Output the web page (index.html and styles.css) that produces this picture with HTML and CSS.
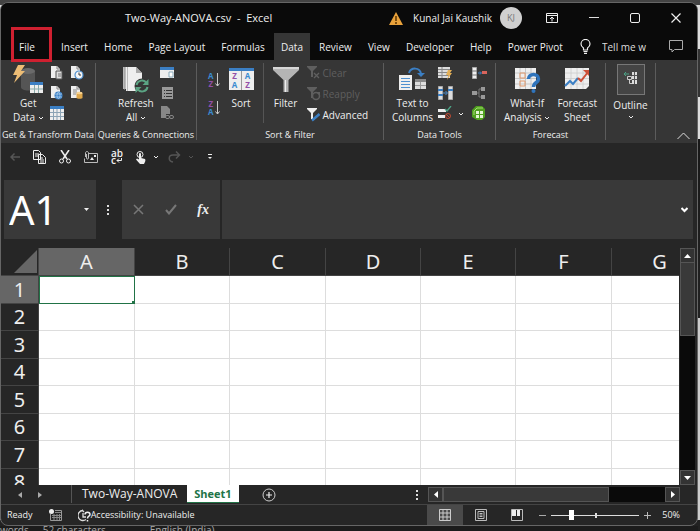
FILE: index.html
```html
<!DOCTYPE html>
<html lang="en">
<head>
	<meta charset="utf-8">
	<title>Two-Way-ANOVA.csv - Excel</title>
	<link rel="stylesheet" href="styles.css">
</head>
<body>
	<svg class="defs" aria-hidden="true">
		<symbol id="page" viewBox="0 0 14 14"><path d="M1 0h6l3 3v9H1z" fill="#eee"/><path d="M7 0v3h3" fill="none" stroke="#888"/></symbol>
		<symbol id="funnel" viewBox="0 0 14 14"><path d="M0 0h10v1L6 5v6H4V5L0 1z" fill="currentColor"/></symbol>
		<symbol id="down" viewBox="0 0 6 6"><path d="M1 2l2 2 2-2" fill="none" stroke="currentColor"/></symbol>
	</svg>

	<div class="window">
		<header class="titlebar">
			<div class="title">Two-Way-ANOVA.csv&nbsp; -&nbsp; Excel</div>
			<svg class="warn" width="14" height="13" viewBox="0 0 14 13"><path d="M7 0l7 13H0z" fill="#e9a23b"/><path d="M7 4v5M7 10v2" stroke="#5a3300" stroke-width="1.5"/></svg>
			<span class="user">Kunal Jai Kaushik</span>
			<span class="avatar">KJ</span>
			<div class="controls">
				<button aria-label="Ribbon display options"><svg width="12" height="10" viewBox="0 0 12 10"><path d="M.5.5h11v9H.5zM.5 2.5h11M6 8.500V4M4 6l2-2 2 2" fill="none" stroke="#eee"/></svg></button>
				<button aria-label="Minimize"><svg width="10" height="10"><path d="M0 4.500h10" stroke="#ddd"/></svg></button>
				<button aria-label="Maximize"><svg width="10" height="10"><rect x=".5" y=".5" width="9" height="9" rx="1.500" fill="none" stroke="#eee"/></svg></button>
				<button aria-label="Close"><svg width="10" height="10"><path d="M.5.5l9 9M9.500.5l-9 9" stroke="#eee" stroke-width="1.200"/></svg></button>
			</div>
		</header>

		<div class="tabs">
			<nav>
				<button class="file">File</button>
				<button>Insert</button>
				<button>Home</button>
				<button>Page Layout</button>
				<button>Formulas</button>
				<button class="active">Data</button>
				<button>Review</button>
				<button>View</button>
				<button>Developer</button>
				<button>Help</button>
				<button>Power Pivot</button>
			</nav>
			<label for="tellme"><svg width="11" height="15" viewBox="0 0 11 15"><path d="M3.500 11V9C2 8 1 6.500 1 5a4.500 4.500 0 0 1 9 0c0 1.500-1 3-2.500 4v2zM3.500 12.500h4M4 14.300h3" fill="none" stroke="#eee" stroke-width="1.200"/></svg></label>
			<input id="tellme" class="tellme" type="text" placeholder="Tell me w">
			<button class="comment" aria-label="Comments"><svg width="14" height="13" viewBox="0 0 14 13"><path d="M.5.5h13v9H5.500l-2.500 2.500v-2.500H.5z" fill="none" stroke="#aaa"/></svg></button>
		</div>

		<section class="ribbon">
			<div class="group g-get">
				<div class="tools">
					<button class="big">
						<svg width="30" height="29" viewBox="0 0 30 29"><path d="M8 6v16c0 2 3 3.500 7 3.500s7-1.500 7-3.500V6z" fill="#555"/><ellipse cx="15" cy="6" rx="7" ry="3" fill="#6a6a6a"/><path d="M5 0h7L8 6h4L1 18l3-8H0z" fill="#edbd75"/><path d="M17 17h13v11H17z" fill="#eee"/><path d="M17 17h13v3H17z" fill="#3b7fc4"/><path d="M17 24h13M21.500 20v8M25.500 20v8" stroke="#8aa"/></svg>
						<span>Get</span><span>Data <svg width="6" height="6"><use href="#down"/></svg></span>
					</button>
					<div class="smalls two">
						<button aria-label="From Text/CSV"><svg width="14" height="14"><use href="#page"/><path d="M6 5h6v8H6z" fill="#ddd" stroke="#555"/><path d="M8 8h3M8 10h3" stroke="#777"/></svg></button>
						<button aria-label="Recent Sources"><svg width="14" height="14"><use href="#page"/><circle cx="9" cy="9" r="4" fill="#f5f5f5" stroke="#4d8fcf" stroke-width="1.200"/><path d="M9 6.500V9h2" fill="none" stroke="#333"/></svg></button>
						<button aria-label="From Web"><svg width="14" height="14"><use href="#page"/><circle cx="8.500" cy="9.500" r="4" fill="#3b7fc4"/><path d="M5 8h7M5 11h7M8.500 6c-2 2-2 5 0 7M8.500 6c2 2 2 5 0 7" fill="none" stroke="#b8d8f4" stroke-width=".7"/></svg></button>
						<button aria-label="Existing Connections"><svg width="14" height="14"><use href="#page"/><path d="M3 4h4M3 6h4M3 8h3" stroke="#888"/><path d="M6.500 7v5c0 1 6 1 6 0V7z" fill="#dfa84c"/><ellipse cx="9.500" cy="7" rx="3" ry="1.300" fill="#f7d391"/></svg></button>
						<button aria-label="From Table/Range"><svg width="14" height="14"><path d="M0 0h14v14H0z" fill="#eee"/><path d="M0 0h14v3H0z" fill="#3b7fc4"/><path d="M0 6.500h14M0 10.500h14M3.500 3v11M7 3v11M10.500 3v11" stroke="#8ba3b5"/></svg></button>
					</div>
				</div>
				<div class="name">Get &amp; Transform Data</div>
			</div>

			<div class="group g-query">
				<div class="tools">
					<button class="big">
						<svg width="28" height="29" viewBox="0 0 28 29"><path d="M1 2h12v22H1z" fill="#bbb"/><path d="M4 2h10l6 6v18H4z" fill="#eee"/><path d="M2.500 2v23M5.500 2v24" stroke="#999" stroke-width=".6"/><path d="M14 2v6h6z" fill="#aaa"/><circle cx="20" cy="21" r="7.500" fill="#363636"/><path d="M14.500 20a5.500 5.500 0 0 1 10-2M25.500 22a5.500 5.500 0 0 1-10 2" fill="none" stroke="#5ba383" stroke-width="2"/><path d="M26.500 14v6h-6zM13.500 28v-6h6z" fill="#5ba383"/></svg>
						<span>Refresh</span><span>All <svg width="6" height="6"><use href="#down"/></svg></span>
					</button>
					<div class="smalls">
						<button aria-label="Queries &amp; Connections"><svg width="14" height="14"><path d="M0 1h14v11H0z" fill="#eee"/><path d="M0 1h14v3H0z" fill="#3b7fc4"/><path d="M9 6h4v5H9z" fill="#fff" stroke="#8ab"/></svg></button>
						<button aria-label="Properties"><svg width="14" height="14"><path d="M2 1h11v12H2z" fill="#999"/><path d="M4 4.500h1M6 4.500h6M4 7.500h1M6 7.500h6M4 10.500h1M6 10.500h6" stroke="#333"/></svg></button>
						<button aria-label="Edit Links"><svg width="14" height="14"><path d="M1 0h6l3 3v5H6v4H1z" fill="#888"/><rect x="5.500" y="9.500" width="4" height="3" rx="1.500" fill="none" stroke="#888"/><rect x="9.500" y="9.500" width="4" height="3" rx="1.500" fill="none" stroke="#888"/></svg></button>
					</div>
				</div>
				<div class="name">Queries &amp; Connections</div>
			</div>

			<div class="group g-sort">
				<div class="tools">
					<div class="orders">
						<button aria-label="Sort A to Z"><span class="az"><b class="blue">A</b><b class="purple">Z</b></span><svg width="5" height="14"><path d="M2.500 0v13M.5 10.500l2 2.500 2-2.500" fill="none" stroke="#ccc"/></svg></button>
						<button aria-label="Sort Z to A"><span class="az"><b class="purple">Z</b><b class="blue">A</b></span><svg width="5" height="14"><path d="M2.500 0v13M.5 10.500l2 2.500 2-2.500" fill="none" stroke="#ccc"/></svg></button>
					</div>
					<button class="big sort">
						<span class="sort-icon"><i class="purple">Z</i><i class="blue">A</i><i class="blue">A</i><i class="purple">Z</i></span>
						<span>Sort</span>
					</button>
					<button class="big filter">
						<svg width="26" height="29" viewBox="0 0 26 29"><path d="M0 2h26v3L15.500 15v12h-5V15L0 5z" fill="#b5b5b5"/><path d="M0 2h26v2H0z" fill="#d5d5d5"/><path d="M12.500 15v12" stroke="#eee"/></svg>
						<span>Filter</span>
					</button>
					<div class="filters">
						<button disabled><svg width="14" height="14"><use href="#funnel"/><path d="M7 7l5 5M12 7l-5 5" stroke="currentColor" stroke-width="1.300"/></svg>Clear</button>
						<button disabled><svg width="14" height="14"><use href="#funnel"/><circle cx="9" cy="9" r="3.500" fill="#363636" stroke="currentColor" stroke-width="1.500"/><path d="M9 5h4v4z" fill="currentColor"/></svg>Reapply</button>
						<button><svg width="14" height="14"><use href="#funnel"/><path d="M5 12.500L12.500 6" stroke="#3b7fc4" stroke-width="2.500"/></svg>Advanced</button>
					</div>
				</div>
				<div class="name">Sort &amp; Filter</div>
			</div>

			<div class="group g-data">
				<div class="tools">
					<button class="big">
						<svg width="28" height="29" viewBox="0 0 28 29"><path d="M0 10h13v15H0z" fill="#eee"/><path d="M2 13.500h9M2 16.500h9M2 19.500h9M2 22.500h9" stroke="#4d8fcf"/><path d="M16 14h11v10H16z" fill="#ddd"/><path d="M16 14h11v3H16z" fill="#888"/><path d="M21.500 17v7M16 20.500h11" stroke="#999"/><path d="M10 8c2-6 11-6 12 1" fill="none" stroke="#3b7fc4" stroke-width="2"/><path d="M18 8h8l-4 4z" fill="#3b7fc4"/></svg>
						<span>Text to</span><span>Columns</span>
					</button>
					<div class="smalls">
						<button aria-label="Flash Fill"><svg width="14" height="14"><path d="M0 1h12v11H0z" fill="#ddd"/><path d="M0 3.500h12M0 6.500h12M0 9.500h12M4 1v11" stroke="#888"/><path d="M10 4h4l-2 3h2l-5 7 1.500-5H8z" fill="#e4b057"/></svg></button>
						<button aria-label="Remove Duplicates"><svg width="15" height="14"><path d="M.5.5h4v13h-4zM10.500.5h4v13h-4z" fill="#ddd" stroke="#aaa"/><path d="M0 3h5v2H0zM0 8h5v2H0zM10 3h5v2h-5z" fill="#3b7fc4"/><path d="M5 7h4M7.500 5l2 2-2 2" fill="none" stroke="#4d8fcf"/></svg></button>
						<button aria-label="Data Validation"><svg width="14" height="14"><path d="M0 3h8v3H0zM0 9h7v3H0z" fill="#eee"/><path d="M7 3l2 2 4-5" fill="none" stroke="#4ca386" stroke-width="1.300"/><circle cx="10" cy="10" r="2.500" fill="none" stroke="#c04b32"/><path d="M8 8l4 4" stroke="#c04b32"/></svg></button>
					</div>
					<svg class="more" width="6" height="6"><use href="#down"/></svg>
					<div class="smalls">
						<button aria-label="Consolidate"><svg width="15" height="14"><path d="M.5 1.500h4v11h-4z" fill="#eee" stroke="#aaa"/><path d="M0 5h5M0 9h5" stroke="#777"/><path d="M6 7h3M8 5.500L9.500 7 8 8.500" fill="none" stroke="#3b7fc4"/><path d="M10 5h5v3h-5z" fill="#d8645c"/></svg></button>
						<button aria-label="Relationships"><svg width="14" height="14"><path d="M0 5h5v4H0zM9 1h4v4H9zM9 9h4v4H9z" fill="#999"/><path d="M5 7h2V3h2M7 7v4h2" fill="none" stroke="#777"/></svg></button>
						<button aria-label="Manage Data Model"><svg width="14" height="14"><path d="M0 4l4-4h6l3 3v8l-3 3H5l-5-3z" fill="#4fa01f"/><path d="M2 9V5l3-3h6" fill="none" stroke="#a6dc73"/><path d="M4 5h7v7H4z" fill="#e4f5d3"/><path d="M4 8.500h7M7.500 5v7" stroke="#4fa01f"/></svg></button>
					</div>
				</div>
				<div class="name">Data Tools</div>
			</div>

			<div class="group g-cast">
				<div class="tools">
					<button class="big">
						<svg width="27" height="29" viewBox="0 0 27 29"><path d="M1 3h21v21H1z" fill="#eee"/><path d="M1 8h21M1 13.500h21M1 19h21M6 3v21M11.500 3v21M17 3v21" stroke="#bbb" stroke-width=".8"/><path d="M6 8h5v5H6zM6 16h5v5H6z" fill="none" stroke="#e39a6c"/><path d="M14.500 14c0-6 10-6 10 0 0 4-5 3-5 8" fill="none" stroke="#2f74bc" stroke-width="3.500"/><circle cx="19.500" cy="26" r="2" fill="#2f74bc"/></svg>
						<span>What-If</span><span>Analysis <svg width="6" height="6"><use href="#down"/></svg></span>
					</button>
					<button class="big">
						<svg width="26" height="29" viewBox="0 0 26 29"><path d="M1 3h24v18l-3 3H1z" fill="#eee"/><path d="M1 8h24M1 13.500h24M1 19h24M7 3v21M13 3v21M19 3v21" stroke="#ccc" stroke-width=".8"/><path d="M1 21l5-5 3 3 5-6" fill="none" stroke="#3b7fc4" stroke-width="2"/><path d="M14 13l3 3 7-9" fill="none" stroke="#cd5038" stroke-width="2"/><path d="M19 5h6v6z" fill="#cd5038"/></svg>
						<span>Forecast</span><span>Sheet</span>
					</button>
				</div>
				<div class="name">Forecast</div>
			</div>

			<div class="group g-outline">
				<button class="big">
					<span class="frame"><svg width="14" height="14"><path d="M8 1h5v12H8z" fill="#ddd"/><path d="M8 4.500h5M8 8.500h5M10.500 1v12" stroke="#555"/><path d="M3.500 5.500h4v3h-4zM5.500 9v3.500H8" fill="none" stroke="#ccc"/><path d="M0 3h5M2 1L0 3l2 2" fill="none" stroke="#4ca386"/></svg></span>
					<span>Outline</span>
					<svg width="6" height="6"><use href="#down"/></svg>
				</button>
			</div>
			<button class="collapse" aria-label="Collapse the ribbon"><svg width="13" height="8"><path d="M.5 7l6-6 6 6" fill="none" stroke="#ddd"/></svg></button>
		</section>

		<div class="quick">
			<button disabled aria-label="Back"><svg width="10" height="10"><path d="M10 5H1M4.500 1.500L1 5l3.500 3.500" fill="none" stroke="currentColor" stroke-width="1.500"/></svg></button>
			<button aria-label="Copy"><svg width="13" height="14"><path d="M.5.5h5l2 2v7h-7zM5.500 4.500h4l3 3v6h-7z" fill="#262626" stroke="currentColor"/><path d="M2 4h4M2 6h3M7 8h3M7 10h4M7 12h4" stroke="currentColor"/></svg></button>
			<button aria-label="Cut"><svg width="12" height="14"><path d="M2 0l6 9M10 0L4 9" stroke="currentColor" stroke-width="1.600"/><circle cx="2.500" cy="11" r="2" fill="none" stroke="currentColor"/><circle cx="9.500" cy="11" r="2" fill="none" stroke="currentColor"/></svg></button>
			<button aria-label="Attach"><svg width="14" height="12"><path d="M5 2.500h8.500v9H.5v-4" fill="none" stroke="#bbb"/><path d="M1.500 6V2c0-2 3-2 3 0v5c0 1.500-2 1.500-2 0V3" fill="none" stroke="#bbb"/><path d="M6 9l2-3 2 3zM10 4h2v2h-2z" fill="currentColor"/></svg></button>
			<button class="spell" aria-label="Wrap Text"><span>ab</span><span>c<svg width="6" height="5"><path d="M5.500 0v2.500H1M3 .5l-2 2 2 2" fill="none" stroke="currentColor"/></svg></span></button>
			<button aria-label="Touch/Mouse Mode"><svg width="10" height="13"><circle cx="4" cy="3.500" r="3" fill="none" stroke="currentColor"/><path d="M3 3c0-1.500 2-1.500 2 0v4l4 1c1 1 0 3-1 5H4L0 8.500l1-1 2 1z" fill="currentColor"/></svg></button>
			<svg width="6" height="6"><use href="#down"/></svg>
			<button disabled aria-label="Redo"><svg width="13" height="12"><path d="M11 4H5c-5 0-5 6 0 7M8 .5L11.500 4 8 7.500" fill="none" stroke="currentColor" stroke-width="1.500"/></svg></button>
			<svg class="dim" width="6" height="6"><use href="#down"/></svg>
			<button class="custom" aria-label="Customize toolbar"><svg width="6" height="6"><path d="M1 .5h4" stroke="currentColor"/><path d="M1 3h4l-2 2z" fill="currentColor"/></svg></button>
		</div>

		<div class="formula">
			<div class="namebox">
				<input type="text" value="A1" aria-label="Name box">
				<svg width="5" height="3"><path d="M0 0h5L2.500 3z" fill="#eee"/></svg>
			</div>
			<svg class="dots" width="2" height="10"><path d="M0 0h2v2H0zM0 4h2v2H0zM0 8h2v2H0z" fill="#ddd"/></svg>
			<div class="entry">
				<button aria-label="Cancel"><svg width="11" height="11"><path d="M1 1l9 9M10 1l-9 9" stroke="#777" stroke-width="1.500"/></svg></button>
				<button aria-label="Enter"><svg width="12" height="11"><path d="M1 6l3 3.500L11 1" fill="none" stroke="#777" stroke-width="2"/></svg></button>
				<button class="fx" aria-label="Insert Function">fx</button>
			</div>
			<div class="fbox">
				<input type="text" aria-label="Formula bar">
				<svg width="7" height="6"><path d="M.5 1l3 3 3-3" fill="none" stroke="#fff" stroke-width="2"/></svg>
			</div>
		</div>

		<main class="sheet">
			<div class="cells">
				<table>
					<colgroup><col class="rowhead"><col class="wide"><col><col class="wide"><col><col><col class="wide"><col class="wide"></colgroup>
					<thead>
						<tr><th><svg width="23" height="23"><path d="M23 0v23H0z" fill="#666"/></svg></th><th class="sel">A</th><th>B</th><th>C</th><th>D</th><th>E</th><th>F</th><th>G</th></tr>
					</thead>
					<tbody>
						<tr><th class="sel">1</th><td class="current"></td><td></td><td></td><td></td><td></td><td></td><td></td></tr>
						<tr><th>2</th><td></td><td></td><td></td><td></td><td></td><td></td><td></td></tr>
						<tr><th>3</th><td></td><td></td><td></td><td></td><td></td><td></td><td></td></tr>
						<tr><th>4</th><td></td><td></td><td></td><td></td><td></td><td></td><td></td></tr>
						<tr><th>5</th><td></td><td></td><td></td><td></td><td></td><td></td><td></td></tr>
						<tr><th>6</th><td></td><td></td><td></td><td></td><td></td><td></td><td></td></tr>
						<tr><th>7</th><td></td><td></td><td></td><td></td><td></td><td></td><td></td></tr>
						<tr><th>8</th><td></td><td></td><td></td><td></td><td></td><td></td><td></td></tr>
					</tbody>
				</table>
			</div>
			<div class="vscroll">
				<button aria-label="Scroll up"><svg width="7" height="4"><path d="M0 4h7L3.500 0z" fill="#fff"/></svg></button>
				<div class="thumb"></div>
				<button aria-label="Scroll down"><svg width="7" height="4"><path d="M0 0h7L3.500 4z" fill="#fff"/></svg></button>
			</div>
		</main>

		<div class="sheetbar">
			<button class="arrow" aria-label="Previous sheet"><svg width="4" height="6"><path d="M4 0v6L0 3z" fill="#aaa"/></svg></button>
			<button class="arrow" aria-label="Next sheet"><svg width="4" height="6"><path d="M0 0v6l4-3z" fill="#aaa"/></svg></button>
			<button class="sheet-tab">Two-Way-ANOVA</button>
			<button class="sheet-tab active">Sheet1</button>
			<button class="add" aria-label="New sheet"><svg width="14" height="14"><circle cx="7" cy="7" r="6" fill="none" stroke="#ccc"/><path d="M7 4v6M4 7h6" stroke="#eee" stroke-width="1.200"/></svg></button>
			<svg class="dots" width="2" height="10"><path d="M0 0h2v2H0zM0 4h2v2H0zM0 8h2v2H0z" fill="#ddd"/></svg>
			<div class="hscroll">
				<button aria-label="Scroll left"><svg width="4" height="7"><path d="M4 0v7L0 3.500z" fill="#fff"/></svg></button>
				<div class="thumb"></div>
				<button aria-label="Scroll right"><svg width="4" height="7"><path d="M0 0v7l4-3.500z" fill="#fff"/></svg></button>
			</div>
		</div>

		<footer class="status">
			<span class="ready">Ready</span>
			<svg class="macro" width="13" height="12"><path d="M1.500 5v6.500h11v-10H6" fill="none" stroke="#999"/><path d="M6 3.500h6M3 6.500h9M3 8.500h9M5 5v6M8 5v6M10.500 5v6" stroke="#888"/><circle cx="2.500" cy="2.500" r="2.500" fill="#eee"/></svg>
			<svg width="13" height="13"><path d="M5 1.500a5 5 0 1 0 3 9M5 4v4h3M4 1l2 2" fill="none" stroke="#ddd" stroke-width="1.300"/><path d="M7 5.500c0-3 5-3 5 0 0 2-2.500 1.500-2.500 4M9.500 11v1.500" fill="none" stroke="#eee" stroke-width="1.500"/></svg>
			<span class="access">Accessibility: Unavailable</span>
			<div class="views">
				<button class="active" aria-label="Normal"><svg width="12" height="12"><path d="M.5.5h11v11H.5zM.5 4h11M.5 8h11M4 .5v11M8 .5v11" fill="none" stroke="#ccc"/></svg></button>
				<button aria-label="Page Layout view"><svg width="12" height="12"><path d="M.5.5h11v11H.5zM3 2.500h6v7H3zM4.500 4.500h3M4.500 6h3M4.500 7.500h3" fill="none" stroke="#bbb"/></svg></button>
				<button aria-label="Page Break Preview"><svg width="12" height="12"><path d="M.5.5h11v11H.5z" fill="none" stroke="#bbb"/><path d="M1 1h4v6H1zM6 1h3v6H6z" fill="#eee"/></svg></button>
			</div>
			<div class="zoom">
				<button aria-label="Zoom out"><svg width="7" height="7"><path d="M0 3.500h7" stroke="#aaa"/></svg></button>
				<input type="range" min="10" max="200" value="50" aria-label="Zoom">
				<button aria-label="Zoom in"><svg width="7" height="7"><path d="M0 3.500h7M3.500 0v7" stroke="#bbb"/></svg></button>
				<span>50%</span>
			</div>
		</footer>
	</div>
	<div class="behind"><span>words</span><span>52 characters</span><span>English (India)</span></div>
</body>
</html>
```

FILE: styles.css
```css
*, *::after {
	box-sizing: border-box;
}

body {
	margin: 0;
	padding: 2px 2px 0 0;
	height: 100vh;
	overflow: hidden;
	display: flex;
	flex-direction: column;
	background: linear-gradient(#444 5px, #ddd 5px, #ddd 49px, #333 49px, #333 97px, #ddd 97px, #ddd 139px, #181818 139px, #222 318px, #ccc 318px, #ccc 520px, #222 520px);
	color: #eee;
	font-family: "Open Sans", "Noto Sans", sans-serif;
	font-size: 10px;
	line-height: 14px;
}

button, input {
	margin: 0;
	padding: 0;
	border: 0;
	background: none;
	color: inherit;
	font: inherit;
}

svg {
	display: block;
	flex: none;
}

.defs {
	position: absolute;
	width: 0;
	height: 0;
}

.window {
	flex: 1;
	min-height: 0;
	display: flex;
	flex-direction: column;
	border: 1px solid #666;
	border-radius: 8px;
	overflow: hidden;
	background: #262626;
}

/* title bar */

.titlebar {
	display: flex;
	align-items: center;
	height: 30px;
	background: #0a0a0a;
	flex: none;
}

.title {
	margin-left: 124px;
	margin-right: auto;
	font-size: 11px;
}

.warn {
	margin-right: 10px;
}

.avatar {
	width: 22px;
	height: 22px;
	margin: 0 24px 0 8px;
	border-radius: 50%;
	background: #d0d0d0;
	color: #777;
	font-size: 9px;
	line-height: 22px;
	text-align: center;
}

.controls {
	display: flex;
	align-items: center;
	gap: 31px;
	margin-right: 16px;
}

/* tabs */

.tabs {
	display: flex;
	align-items: center;
	height: 27px;
	background: #0a0a0a;
	flex: none;
}

.tabs nav {
	display: flex;
	justify-content: space-between;
	flex: 1;
	margin-left: 11px;
	margin-right: 10px;
}

.tabs nav button {
	height: 27px;
	padding: 0 7px;
	white-space: nowrap;
}

.tabs .active {
	background: #363636;
}

.tabs .file {
	position: relative;
	margin-right: 10px;
}

.tabs .file::after {
	content: "";
	position: absolute;
	top: -6px;
	left: -1px;
	width: 41px;
	height: 35px;
	border: 3px solid #cf2030;
}

.tellme {
	width: 52px;
	margin: 0 15px 0 11px;
}

.tellme::placeholder {
	color: #ddd;
}

.comment {
	margin-right: 14px;
}

/* ribbon */

.ribbon {
	display: grid;
	grid-template-columns: 95px 101px 187px 112px 110px 50px 1fr;
	height: 83px;
	padding: 3px 0;
	background: #363636;
	flex: none;
}

.group {
	display: flex;
	flex-direction: column;
	justify-content: space-between;
	border-right: 1px solid #5c5c5c;
}

.tools {
	display: flex;
	align-items: flex-start;
}

.name {
	font-size: 9px;
	line-height: 10px;
	text-align: center;
	white-space: nowrap;
}

.big {
	display: flex;
	flex-direction: column;
	align-items: center;
	white-space: nowrap;
}

.big > svg {
	margin: 2px 0;
}

.big span svg {
	display: inline-block;
}

.smalls {
	display: grid;
	gap: 6px;
	padding-top: 3px;
}

.smalls button {
	height: 14px;
}

.two {
	grid-template-columns: 14px 14px;
}

.g-get .tools {
	padding-left: 12px;
	gap: 6px;
}

.g-query .tools {
	padding-left: 22px;
	gap: 6px;
}

.orders {
	display: grid;
	gap: 12px;
	padding: 9px 0 0 11px;
}

.orders button {
	display: flex;
	align-items: center;
	gap: 1px;
}

.az {
	display: grid;
	font-size: 8px;
	line-height: 8px;
}

.blue {
	color: #3b8ad0;
}

.purple {
	color: #9350a8;
}

.sort {
	margin-left: 9px;
	padding-right: 9px;
	border-right: 1px solid #555;
	height: 60px;
}

.sort-icon {
	display: grid;
	grid-template-columns: 12px 12px;
	grid-auto-flow: column;
	grid-template-rows: 9px 9px;
	gap: 0 1px;
	margin: 5px 0 6px;
	border-top: 3px solid #3b7fc4;
	background: linear-gradient(90deg, #eee 12px, #999 12px, #999 13px, #eee 13px);
	font-size: 8px;
	line-height: 9px;
	padding-bottom: 1px;
}

.sort-icon i {
	font-style: normal;
	font-weight: bold;
}

.filter {
	margin-left: 9px;
}

.filters {
	display: grid;
	gap: 7px;
	padding: 3px 0 0 8px;
}

.filters button {
	display: flex;
	align-items: center;
	gap: 2px;
}

.filters button:disabled {
	color: #5f5f5f;
}

.g-data .tools {
	padding-left: 8px;
	gap: 5px;
}

.more {
	margin: 48px 3px 0 0;
}

.g-cast .tools {
	padding: 0 8px;
	justify-content: space-between;
}

.frame {
	padding: 6px;
	margin: 1px 0 3px;
	border: 1px solid #777;
	background: #444;
}

.frame svg {
	display: block;
}

.collapse {
	justify-self: end;
	align-self: end;
	margin-right: 7px;
}

/* quick access */

.quick {
	display: flex;
	align-items: center;
	gap: 13px;
	height: 28px;
	padding-left: 9px;
	margin-bottom: 9px;
	flex: none;
}

.quick > svg {
	margin: 0 -4px 0 -6px;
}

.quick button:disabled, .dim {
	color: #555;
}

.spell {
	font-size: 10px;
	line-height: 7px;
	font-weight: 600;
}

.spell span {
	display: flex;
	align-items: center;
}

.custom {
	margin-left: 4px;
}

/* formula bar */

.formula {
	display: flex;
	align-items: center;
	height: 59px;
	padding: 0 4px 0 3px;
	flex: none;
}

.namebox, .entry, .fbox {
	display: flex;
	align-items: center;
	height: 59px;
	background: #393939;
}

.namebox {
	width: 92px;
	padding: 0 7px 0 5px;
}

.namebox input {
	width: 100%;
	flex: 1;
	min-width: 0;
	height: 56px;
	font-family: "Noto Sans", sans-serif;
	font-size: 40px;
	color: #fff;
}

.formula .dots {
	margin: 0 13px 0 11px;
}

.entry {
	width: 98px;
	margin-right: 2px;
	padding: 0 11px;
	justify-content: space-between;
}

.fx {
	font-family: "Liberation Serif", serif;
	font-style: italic;
	font-weight: bold;
	font-size: 14px;
}

.fbox {
	flex: 1;
	padding: 0 5px;
}

.fbox input {
	flex: 1;
	height: 50px;
	font-size: 20px;
}

/* sheet */

.sheet {
	display: flex;
	flex: 1;
	min-height: 0;
	margin-top: 9px;
}

.cells {
	flex: 1;
	min-width: 0;
	overflow: hidden;
}

table {
	width: 707px;
	table-layout: fixed;
	border-collapse: separate;
	border-spacing: 0;
}

col {
	width: 95px;
}

.wide {
	width: 96px;
}

.rowhead {
	width: 38px;
}

th {
	height: 28px;
	padding: 0;
	border-right: 1px solid #444;
	border-bottom: 1px solid #444;
	background: #262626;
	color: #eee;
	font-family: "Noto Sans", sans-serif;
	font-weight: normal;
	font-size: 20px;
	line-height: 26px;
}

th svg {
	margin-left: 13px;
}

th.sel {
	background: #666;
}

td {
	padding: 0;
	border-right: 1px solid #ddd;
	border-bottom: 1px solid #ddd;
	background: #fff;
}

tbody tr:nth-child(even) th {
	height: 27px;
}

.current {
	position: relative;
	border-color: #217346;
	box-shadow: inset 1px 1px #217346;
}

.current::after {
	content: "";
	position: absolute;
	right: -1px;
	bottom: -1px;
	width: 3px;
	height: 3px;
	background: #217346;
}

.vscroll {
	display: flex;
	flex-direction: column;
	width: 15px;
	margin: 0 2px 0 1px;
	background: #0a0a0a;
}

.vscroll button, .hscroll button {
	display: flex;
	align-items: center;
	justify-content: center;
	width: 15px;
	height: 15px;
	border: 1px solid #555;
	background: #333;
	flex: none;
}

.vscroll .thumb {
	height: 73px;
	margin-bottom: auto;
	border: 1px solid #555;
	border-top: 0;
	background: #393939;
}

/* sheet tabs */

.sheetbar {
	display: flex;
	align-items: center;
	height: 20px;
	border-bottom: 1px solid #444;
	flex: none;
}

.arrow {
	margin-left: 16px;
}

.arrow:first-child {
	margin-left: 17px;
}

.sheet-tab {
	height: 18px;
	padding: 0 7px;
	font-size: 12px;
	align-self: flex-start;
}

.arrow + .sheet-tab {
	margin-left: 29px;
	padding: 0 10px;
	border-left: 1px solid #555;
}

.sheet-tab.active {
	background: #fff;
	color: #217346;
	font-size: 11px;
	font-weight: bold;
	border-bottom: 1px solid #217346;
}

.add {
	margin-left: 23px;
	margin-right: auto;
}

.hscroll {
	display: flex;
	width: 252px;
	margin: 0 17px 0 10px;
	background: #0a0a0a;
}

.hscroll .thumb {
	width: 166px;
	margin-right: auto;
	border: 1px solid #555;
	background: #393939;
}

/* status bar */

.status {
	display: flex;
	align-items: center;
	height: 20px;
	font-size: 9px;
	flex: none;
}

.ready {
	margin-left: 6px;
}

.macro {
	margin: 0 16px;
}

.access {
	margin-right: auto;
}

.views {
	display: flex;
}

.views button {
	display: flex;
	align-items: center;
	justify-content: center;
	width: 36px;
	height: 20px;
}

.views .active {
	background: #4a4a4a;
}

.zoom {
	display: flex;
	align-items: center;
	margin: 0 17px 0 4px;
}

.zoom input {
	appearance: none;
	width: 88px;
	height: 12px;
	margin: 0 5px;
	background: linear-gradient(#ddd, #ddd) 44px 50% / 2px 5px no-repeat, linear-gradient(#ddd, #ddd) 0 50% / 100% 1px no-repeat;
}

.zoom input::-webkit-slider-thumb {
	appearance: none;
	width: 5px;
	height: 10px;
	background: #fff;
}

.zoom span {
	margin-left: 11px;
}

/* strip of the window underneath */

.behind {
	display: flex;
	gap: 14px;
	height: 5px;
	overflow: hidden;
	background: #1c1c1c;
	color: #aaa;
	font-size: 10px;
	line-height: 8px;
	flex: none;
}

.behind span:last-child {
	margin-left: 30px;
}
```
